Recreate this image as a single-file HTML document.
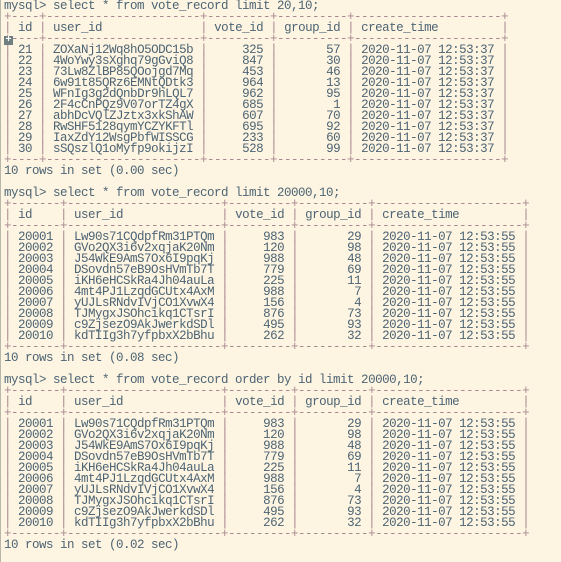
<!DOCTYPE html>
<html><head><meta charset="utf-8">
<style>
html,body{margin:0;padding:0;background:#fdf5e2;width:561px;height:562px;overflow:hidden;}
body{border-left:1px solid #b9b6aa;box-sizing:border-box;position:relative;}
pre{margin:0;position:absolute;left:3px;top:1px;font-family:"Liberation Mono",monospace;font-size:12.5px;letter-spacing:-0.5px;line-height:11px;color:#4d6474;}
b{font-weight:normal;color:#a88890;}
.cur{position:absolute;left:3px;top:36px;width:9px;height:9px;background:#6f7f80;color:#fff;font:bold 10px/9px "Liberation Mono",monospace;text-align:center;}
</style></head><body>
<pre>mysql&gt; select * from vote_record limit 20,10;
<b>+----+----------------------+---------+----------+---------------------+</b>
<b>|</b> id <b>|</b> user_id              <b>|</b> vote_id <b>|</b> group_id <b>|</b> create_time         <b>|</b>
<b>+----+----------------------+---------+----------+---------------------+</b>
<b>|</b> 21 <b>|</b> ZOXaNj12Wq8hO5ODC15b <b>|</b>     325 <b>|</b>       57 <b>|</b> 2020-11-07 12:53:37 <b>|</b>
<b>|</b> 22 <b>|</b> 4WoYwy3sXghq79gGviQ8 <b>|</b>     847 <b>|</b>       30 <b>|</b> 2020-11-07 12:53:37 <b>|</b>
<b>|</b> 23 <b>|</b> 73Lw8ZlBP85QOojgd7Mq <b>|</b>     453 <b>|</b>       46 <b>|</b> 2020-11-07 12:53:37 <b>|</b>
<b>|</b> 24 <b>|</b> 6w91t85QRz6EMNtQDtk3 <b>|</b>     964 <b>|</b>       13 <b>|</b> 2020-11-07 12:53:37 <b>|</b>
<b>|</b> 25 <b>|</b> WFnIg3g2dQnbDr9hLQL7 <b>|</b>     962 <b>|</b>       95 <b>|</b> 2020-11-07 12:53:37 <b>|</b>
<b>|</b> 26 <b>|</b> 2F4cCnPQz9V07orTZ4gX <b>|</b>     685 <b>|</b>        1 <b>|</b> 2020-11-07 12:53:37 <b>|</b>
<b>|</b> 27 <b>|</b> abhDcVQlZJztx3xkShAW <b>|</b>     607 <b>|</b>       70 <b>|</b> 2020-11-07 12:53:37 <b>|</b>
<b>|</b> 28 <b>|</b> RwSHF5128qymYCZYKFTl <b>|</b>     695 <b>|</b>       92 <b>|</b> 2020-11-07 12:53:37 <b>|</b>
<b>|</b> 29 <b>|</b> IaxZdY12WsgPbfWISSCG <b>|</b>     233 <b>|</b>       60 <b>|</b> 2020-11-07 12:53:37 <b>|</b>
<b>|</b> 30 <b>|</b> sSQszlQ1oMyfp9okijzI <b>|</b>     528 <b>|</b>       99 <b>|</b> 2020-11-07 12:53:37 <b>|</b>
<b>+----+----------------------+---------+----------+---------------------+</b>
10 rows in set (0.00 sec)

mysql&gt; select * from vote_record limit 20000,10;
<b>+-------+----------------------+---------+----------+---------------------+</b>
<b>|</b> id    <b>|</b> user_id              <b>|</b> vote_id <b>|</b> group_id <b>|</b> create_time         <b>|</b>
<b>+-------+----------------------+---------+----------+---------------------+</b>
<b>|</b> 20001 <b>|</b> Lw90s71CQdpfRm31PTQm <b>|</b>     983 <b>|</b>       29 <b>|</b> 2020-11-07 12:53:55 <b>|</b>
<b>|</b> 20002 <b>|</b> GVo2QX3i6v2xqjaK20Nm <b>|</b>     120 <b>|</b>       98 <b>|</b> 2020-11-07 12:53:55 <b>|</b>
<b>|</b> 20003 <b>|</b> J54WkE9AmS7Ox6I9pqKj <b>|</b>     988 <b>|</b>       48 <b>|</b> 2020-11-07 12:53:55 <b>|</b>
<b>|</b> 20004 <b>|</b> DSovdn57eB9OsHVmTb7T <b>|</b>     779 <b>|</b>       69 <b>|</b> 2020-11-07 12:53:55 <b>|</b>
<b>|</b> 20005 <b>|</b> iKH6eHCSkRa4Jh04auLa <b>|</b>     225 <b>|</b>       11 <b>|</b> 2020-11-07 12:53:55 <b>|</b>
<b>|</b> 20006 <b>|</b> 4mt4PJ1LzqdGCUtx4AxM <b>|</b>     988 <b>|</b>        7 <b>|</b> 2020-11-07 12:53:55 <b>|</b>
<b>|</b> 20007 <b>|</b> yUJLsRNdvIVjCO1XvwX4 <b>|</b>     156 <b>|</b>        4 <b>|</b> 2020-11-07 12:53:55 <b>|</b>
<b>|</b> 20008 <b>|</b> TJMygxJSOhcikq1CTsrI <b>|</b>     876 <b>|</b>       73 <b>|</b> 2020-11-07 12:53:55 <b>|</b>
<b>|</b> 20009 <b>|</b> c9ZjsezO9AkJwerkdSDl <b>|</b>     495 <b>|</b>       93 <b>|</b> 2020-11-07 12:53:55 <b>|</b>
<b>|</b> 20010 <b>|</b> kdTIIg3h7yfpbxX2bBhu <b>|</b>     262 <b>|</b>       32 <b>|</b> 2020-11-07 12:53:55 <b>|</b>
<b>+-------+----------------------+---------+----------+---------------------+</b>
10 rows in set (0.08 sec)

mysql&gt; select * from vote_record order by id limit 20000,10;
<b>+-------+----------------------+---------+----------+---------------------+</b>
<b>|</b> id    <b>|</b> user_id              <b>|</b> vote_id <b>|</b> group_id <b>|</b> create_time         <b>|</b>
<b>+-------+----------------------+---------+----------+---------------------+</b>
<b>|</b> 20001 <b>|</b> Lw90s71CQdpfRm31PTQm <b>|</b>     983 <b>|</b>       29 <b>|</b> 2020-11-07 12:53:55 <b>|</b>
<b>|</b> 20002 <b>|</b> GVo2QX3i6v2xqjaK20Nm <b>|</b>     120 <b>|</b>       98 <b>|</b> 2020-11-07 12:53:55 <b>|</b>
<b>|</b> 20003 <b>|</b> J54WkE9AmS7Ox6I9pqKj <b>|</b>     988 <b>|</b>       48 <b>|</b> 2020-11-07 12:53:55 <b>|</b>
<b>|</b> 20004 <b>|</b> DSovdn57eB9OsHVmTb7T <b>|</b>     779 <b>|</b>       69 <b>|</b> 2020-11-07 12:53:55 <b>|</b>
<b>|</b> 20005 <b>|</b> iKH6eHCSkRa4Jh04auLa <b>|</b>     225 <b>|</b>       11 <b>|</b> 2020-11-07 12:53:55 <b>|</b>
<b>|</b> 20006 <b>|</b> 4mt4PJ1LzqdGCUtx4AxM <b>|</b>     988 <b>|</b>        7 <b>|</b> 2020-11-07 12:53:55 <b>|</b>
<b>|</b> 20007 <b>|</b> yUJLsRNdvIVjCO1XvwX4 <b>|</b>     156 <b>|</b>        4 <b>|</b> 2020-11-07 12:53:55 <b>|</b>
<b>|</b> 20008 <b>|</b> TJMygxJSOhcikq1CTsrI <b>|</b>     876 <b>|</b>       73 <b>|</b> 2020-11-07 12:53:55 <b>|</b>
<b>|</b> 20009 <b>|</b> c9ZjsezO9AkJwerkdSDl <b>|</b>     495 <b>|</b>       93 <b>|</b> 2020-11-07 12:53:55 <b>|</b>
<b>|</b> 20010 <b>|</b> kdTIIg3h7yfpbxX2bBhu <b>|</b>     262 <b>|</b>       32 <b>|</b> 2020-11-07 12:53:55 <b>|</b>
<b>+-------+----------------------+---------+----------+---------------------+</b>
10 rows in set (0.02 sec)</pre>
<div class="cur">+</div>
</body></html>
